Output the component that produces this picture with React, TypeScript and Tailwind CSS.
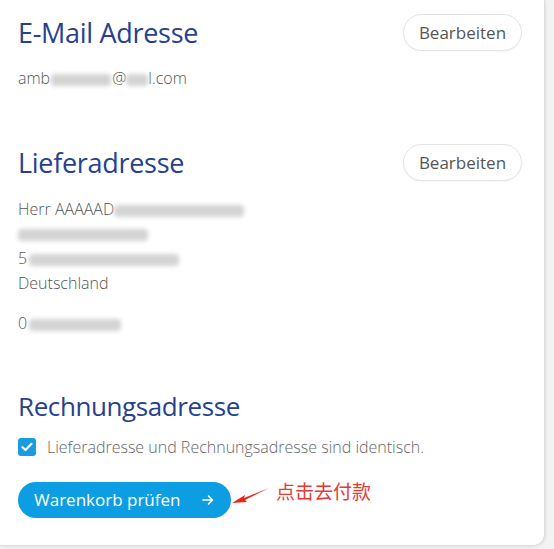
import React from 'react';

function Blur({ w, className = '' }: { w: number; className?: string }) {
  return (
    <span
      className={`inline-block h-[12px] align-middle rounded-sm bg-[#d4d4d4] blur-[2px] ${className}`}
      style={{ width: w }}
    />
  );
}

function EditButton() {
  return (
    <button className="h-[37px] w-[119px] rounded-full border border-[#e3e3e3] bg-white text-[17px] text-[#555] shadow-[0_1px_2px_rgba(0,0,0,0.04)]">
      Bearbeiten
    </button>
  );
}

export default function App() {
  return (
    <div className="h-[549px] w-[554px] bg-[#f3f3f3] font-['Open_Sans',sans-serif]">
      <div className="h-[546px] w-[545px] rounded-br-[12px] border-r border-b border-[#dedede] bg-white pl-[18px] pr-[22px] shadow-[1px_1px_3px_rgba(0,0,0,0.08)]">
        <div className="flex items-center justify-between pt-[14px]">
          <h2 className="text-[27px] leading-[37px] text-[#27418f] tracking-[-0.3px]">E-Mail Adresse</h2>
          <EditButton />
        </div>
        <p className="mt-[15px] text-[16px] font-light leading-[24px] text-[#555]">
          amb<Blur w={60} className="mx-[1px]" />@<Blur w={22} />l.com
        </p>

        <div className="mt-[54px] flex items-center justify-between">
          <h2 className="text-[27px] leading-[37px] text-[#27418f] tracking-[-0.3px]">Lieferadresse</h2>
          <EditButton />
        </div>
        <div className="mt-[16px] text-[16px] font-light leading-[24.5px] text-[#555]">
          <p>
            Herr AAAAAD<Blur w={130} />
          </p>
          <p>
            <Blur w={130} />
          </p>
          <p>
            5<Blur w={150} className="ml-[2px]" />
          </p>
          <p>Deutschland</p>
          <p className="mt-[16px]">
            0<Blur w={92} className="ml-[2px]" />
          </p>
        </div>

        <h2 className="mt-[52px] text-[26px] leading-[37px] text-[#27418f] tracking-[-0.4px]">Rechnungsadresse</h2>
        <label className="mt-[10px] flex items-center gap-[11px] text-[16px] font-light text-[#666]">
          <span className="flex h-[18px] w-[18px] items-center justify-center rounded-[3px] bg-[#1b9be0]">
            <svg width="12" height="10" viewBox="0 0 12 10" fill="none">
              <path d="M1.5 5.2 4.5 8 10.5 1.8" stroke="white" strokeWidth="2.2" strokeLinecap="round" strokeLinejoin="round" />
            </svg>
          </span>
          Lieferadresse und Rechnungsadresse sind identisch.
        </label>

        <div className="relative mt-[23px] flex items-center">
          <button className="flex h-[36px] w-[213px] items-center gap-[22px] rounded-full bg-[#0d9de2] pl-[16px] text-[17px] text-white">
            Warenkorb prüfen
            <svg width="12" height="12" viewBox="0 0 12 12" fill="none">
              <path d="M1 6h9.5M6.5 2l4 4-4 4" stroke="white" strokeWidth="1.6" strokeLinecap="round" strokeLinejoin="round" />
            </svg>
          </button>
          <svg className="ml-[1px] -mt-[6px]" width="40" height="24" viewBox="0 0 40 24">
            <path d="M37 3 L12 13 L13 10 L0 18 L15 17 L13 15 Z" fill="#e8251b" />
          </svg>
          <span className="ml-[4px] -mt-[16px] font-['Noto_Sans_CJK_SC',sans-serif] text-[19px] text-[#e53935]">点击去付款</span>
        </div>
      </div>
    </div>
  );
}
